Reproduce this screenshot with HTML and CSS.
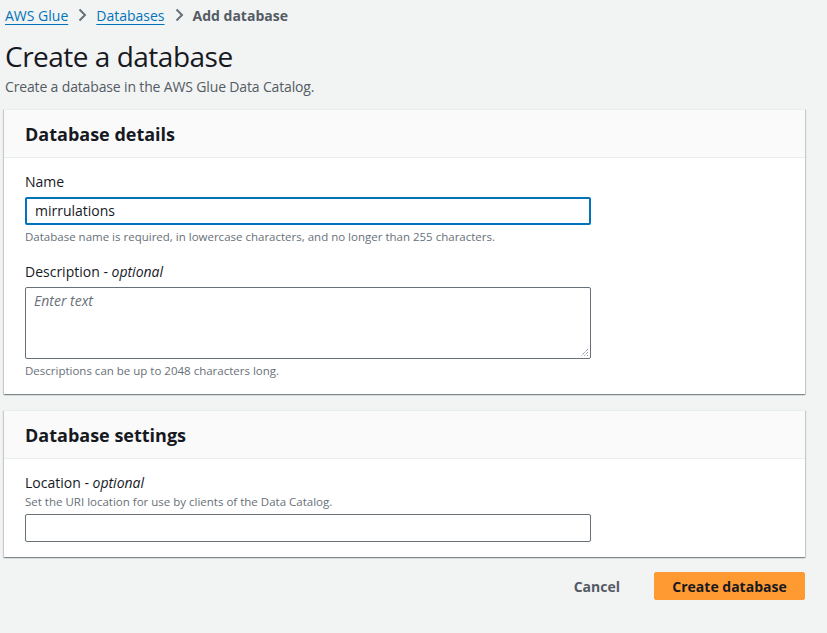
FILE: index.html
```html
<!DOCTYPE html>
<html>
<head>
<meta charset="utf-8">
<link rel="stylesheet" href="styles.css">
</head>
<body>
<div class="page">
  <nav class="crumbs">
    <a class="crumb-link" href="#">AWS Glue</a>
    <svg class="chev" width="16" height="16" viewBox="0 0 16 16"><path d="M5.5 2.5l5.5 5.5-5.5 5.5" fill="none" stroke="#687078" stroke-width="2"/></svg>
    <a class="crumb-link" href="#">Databases</a>
    <svg class="chev" width="16" height="16" viewBox="0 0 16 16"><path d="M5.5 2.5l5.5 5.5-5.5 5.5" fill="none" stroke="#687078" stroke-width="2"/></svg>
    <span class="crumb-current">Add database</span>
  </nav>
  <h1 class="title">Create a database</h1>
  <p class="subtitle">Create a database in the AWS Glue Data Catalog.</p>

  <section class="card">
    <div class="card-head"><h2>Database details</h2></div>
    <div class="card-body">
      <div class="field">
        <label class="label">Name</label>
        <div class="input focused">mirrulations</div>
        <div class="hint">Database name is required, in lowercase characters, and no longer than 255 characters.</div>
      </div>
      <div class="field">
        <label class="label">Description - <i>optional</i></label>
        <div class="textarea"><span class="placeholder">Enter text</span>
          <svg class="grip" width="9" height="9" viewBox="0 0 9 9"><path d="M8 1L1 8M8 4L4 8M8 7L7 8" stroke="#687078" stroke-width="1" stroke-dasharray="1 1"/></svg>
        </div>
        <div class="hint after-area">Descriptions can be up to 2048 characters long.</div>
      </div>
    </div>
  </section>

  <section class="card">
    <div class="card-head"><h2>Database settings</h2></div>
    <div class="card-body">
      <div class="field">
        <label class="label">Location - <i>optional</i></label>
        <div class="hint desc">Set the URI location for use by clients of the Data Catalog.</div>
        <div class="input"></div>
      </div>
    </div>
  </section>

  <div class="actions">
    <button class="btn-link">Cancel</button>
    <button class="btn-primary">Create database</button>
  </div>
</div>
</body>
</html>
```
FILE: styles.css
```css
html, body {
  margin: 0;
  padding: 0;
  background: #f2f3f3;
  font-family: "Open Sans", "Noto Sans", sans-serif;
  color: #16191f;
}
.page {
  width: 801px;
  padding-left: 4px;
}
.crumbs {
  display: flex;
  align-items: center;
  height: 30px;
  padding-left: 1px;
  font-size: 14px;
}
.crumb-link {
  color: #0073bb;
  text-decoration: underline;
  text-underline-offset: 3px;
}
.chev {
  margin: 0 6px;
}
.crumb-current {
  color: #545b64;
  font-weight: 700;
}
.title {
  margin: 8px 0 0 1px;
  font-size: 28px;
  font-weight: 400;
  line-height: 36px;
  letter-spacing: -0.5px;
}
.subtitle {
  margin: 3px 0 0 1px;
  font-size: 14px;
  line-height: 20px;
  color: #545b64;
  letter-spacing: -0.15px;
}
.card {
  background: #fff;
  margin-top: 12px;
  box-shadow: 0 1px 1px 0 rgba(0,28,36,0.3), 1px 1px 1px 0 rgba(0,28,36,0.15), -1px 1px 1px 0 rgba(0,28,36,0.15);
  border-top: 1px solid #eaeded;
}
.card + .card {
  margin-top: 16px;
}
.card-head {
  background: #fafafa;
  border-bottom: 1px solid #eaeded;
  height: 47px;
  display: flex;
  align-items: center;
  padding-left: 21px;
}
.card-head h2 {
  margin: 0;
  font-size: 18px;
  font-weight: 700;
}
.card-body {
  padding: 13px 21px 15px;
  display: flex;
  flex-direction: column;
  gap: 15px;
}
.label {
  display: block;
  font-size: 14px;
  line-height: 22px;
  margin-bottom: 4px;
}
.input {
  box-sizing: border-box;
  width: 566px;
  height: 28px;
  border: 1px solid #687078;
  border-radius: 2px;
  font-size: 14px;
  line-height: 26px;
  padding-left: 9px;
}
.input.focused {
  border: 2px solid #0073bb;
  line-height: 24px;
  padding-left: 8px;
}
.textarea {
  position: relative;
  box-sizing: border-box;
  width: 566px;
  height: 72px;
  border: 1px solid #687078;
  border-radius: 2px;
  font-size: 14px;
  line-height: 26px;
  padding-left: 8px;
}
.placeholder {
  color: #687078;
  font-style: italic;
}
.grip {
  position: absolute;
  right: 1px;
  bottom: 1px;
}
.hint {
  font-size: 11.5px;
  line-height: 18px;
  color: #687078;
  margin-top: 3px;
}
.hint.after-area {
  margin-top: 3px;
  margin-bottom: -1px;
}
.hint.desc {
  margin-top: -5px;
  margin-bottom: 3px;
}
.actions {
  display: flex;
  justify-content: flex-end;
  align-items: center;
  gap: 14px;
  margin-top: 15px;
}
.btn-link {
  background: none;
  border: none;
  font-family: inherit;
  font-size: 14px;
  font-weight: 700;
  color: #545b64;
  padding: 4px 20px;
}
.btn-primary {
  background: #ff9a33;
  border: 1px solid #ff9a33;
  border-radius: 2px;
  font-family: inherit;
  font-size: 14px;
  font-weight: 700;
  color: #16191f;
  height: 28px;
  width: 151px;
}
```
